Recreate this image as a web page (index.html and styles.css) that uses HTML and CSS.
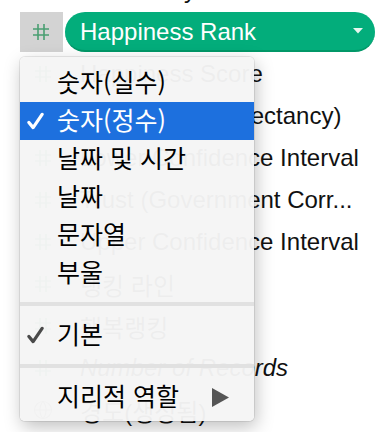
FILE: index.html
```html
<!DOCTYPE html>
<html lang="ko">
<head>
<meta charset="utf-8">
<link rel="stylesheet" href="styles.css">
</head>
<body>
<div class="list">
  <div class="row row-first">
    <svg class="ic" viewBox="0 0 18 18"><path d="M6 1v16M12 1v16M1 6h16M1 12h16" /></svg>
    <span class="name">Generosity</span>
  </div>
  <div class="row row-sel">
    <div class="sq"><svg class="ic" viewBox="0 0 18 18"><path d="M6 1v16M12 1v16M1 6h16M1 12h16" /></svg></div>
    <div class="pill">
      <span class="pill-text">Happiness Rank</span>
      <svg class="caret" viewBox="0 0 10 6"><polygon points="0,0 10,0 5,5.5" /></svg>
    </div>
  </div>
  <div class="row"><svg class="ic" viewBox="0 0 18 18"><path d="M6 1v16M12 1v16M1 6h16M1 12h16" /></svg><span class="name">Happiness Score</span></div>
  <div class="row"><svg class="ic" viewBox="0 0 18 18"><path d="M6 1v16M12 1v16M1 6h16M1 12h16" /></svg><span class="name">Health (Life Expectancy)</span></div>
  <div class="row"><svg class="ic" viewBox="0 0 18 18"><path d="M6 1v16M12 1v16M1 6h16M1 12h16" /></svg><span class="name">Lower Confidence Interval</span></div>
  <div class="row"><svg class="ic" viewBox="0 0 18 18"><path d="M6 1v16M12 1v16M1 6h16M1 12h16" /></svg><span class="name">Trust (Government Corr...</span></div>
  <div class="row"><svg class="ic" viewBox="0 0 18 18"><path d="M6 1v16M12 1v16M1 6h16M1 12h16" /></svg><span class="name">Upper Confidence Interval</span></div>
  <div class="row"><svg class="ic" viewBox="0 0 18 18"><path d="M6 1v16M12 1v16M1 6h16M1 12h16" /></svg><span class="name">랭킹 라인</span></div>
  <div class="row"><svg class="ic" viewBox="0 0 18 18"><path d="M6 1v16M12 1v16M1 6h16M1 12h16" /></svg><span class="name">행복랭킹</span></div>
  <div class="row"><svg class="ic" viewBox="0 0 18 18"><path d="M6 1v16M12 1v16M1 6h16M1 12h16" /></svg><span class="name italic">Number of Records</span></div>
  <div class="row"><svg class="ic globe" viewBox="0 0 20 20"><circle cx="10" cy="10" r="8.5" /><path d="M1.5 10h17M10 1.5c-4 4-4 13 0 17M10 1.5c4 4 4 13 0 17" /></svg><span class="name">경도(생성됨)</span></div>
</div>

<div class="menu">
  <div class="item"><span class="chk"></span><span class="label">숫자(실수)</span></div>
  <div class="item active"><span class="chk"><svg viewBox="0 0 18 18"><path d="M2 10.5 L6.5 16 L16 2" /></svg></span><span class="label">숫자(정수)</span></div>
  <div class="item"><span class="chk"></span><span class="label">날짜 및 시간</span></div>
  <div class="item"><span class="chk"></span><span class="label">날짜</span></div>
  <div class="item"><span class="chk"></span><span class="label">문자열</span></div>
  <div class="item"><span class="chk"></span><span class="label">부울</span></div>
  <div class="sep"></div>
  <div class="item"><span class="chk gray"><svg viewBox="0 0 18 18"><path d="M2 10.5 L6.5 16 L16 2" /></svg></span><span class="label">기본</span></div>
  <div class="sep"></div>
  <div class="item"><span class="chk"></span><span class="label">지리적 역할</span><svg class="sub" viewBox="0 0 17 19"><polygon points="0,0 17,9.5 0,19" /></svg></div>
</div>
</body>
</html>
```
FILE: styles.css
```css
html, body {
  margin: 0;
  padding: 0;
  background: #ffffff;
  overflow: hidden;
  width: 380px;
  height: 432px;
}
body {
  position: relative;
  font-family: "Liberation Sans", "Noto Sans CJK KR", sans-serif;
  color: #111;
}
.list {
  display: flex;
  flex-direction: column;
  margin-top: -31px;
}
.row {
  display: flex;
  align-items: center;
  height: 42px;
  padding-left: 34px;
  font-size: 24px;
  white-space: nowrap;
}
.ic {
  width: 18px;
  height: 18px;
  flex: none;
  margin-right: 28px;
  fill: none;
  stroke: #4a9f72;
  stroke-width: 1.6;
}
.globe {
  width: 20px;
  height: 20px;
  stroke: #888;
  stroke-width: 1.2;
  margin-left: -1px;
  margin-right: 27px;
}
.italic { font-style: italic; }
.row-sel {
  padding-left: 20px;
}
.sq {
  width: 43px;
  height: 40px;
  background: #d3d3d3;
  display: flex;
  align-items: center;
  justify-content: center;
  flex: none;
}
.sq .ic {
  margin: 0 2px 0 0;
}
.pill {
  margin-left: 2px;
  width: 310px;
  height: 40px;
  box-sizing: border-box;
  border-radius: 20px;
  background: #03ad7b;
  border-bottom: 2px solid #019868;
  display: flex;
  align-items: center;
  padding: 0 12px 0 15px;
  color: #fff;
}
.pill-text {
  flex: 1;
  font-size: 24px;
  margin-top: 1px;
}
.caret {
  width: 10px;
  height: 6px;
  fill: #e8f6ef;
}
.menu {
  position: absolute;
  left: 20px;
  top: 57px;
  width: 234px;
  box-sizing: border-box;
  padding: 7px 0 5px;
  background: rgba(245, 245, 245, 0.97);
  border-radius: 5px;
  box-shadow: 0 0 0 1px rgba(0,0,0,0.08), 2px 6px 18px rgba(0,0,0,0.25);
  font-family: "Noto Sans CJK KR", "Liberation Sans", sans-serif;
  font-size: 25px;
  font-weight: 400;
  color: #000;
}
.item {
  display: flex;
  align-items: center;
  height: 38px;
  line-height: 38px;
}
.item .label {
  margin-top: -5px;
}
.item.active {
  background: #1d70de;
  color: #fff;
}
.chk {
  width: 37px;
  flex: none;
  display: flex;
  align-items: center;
  padding-left: 7px;
  box-sizing: border-box;
}
.chk svg {
  width: 17px;
  height: 18px;
  fill: none;
  stroke: #fff;
  stroke-width: 3.4;
  stroke-linecap: round;
  stroke-linejoin: round;
}
.chk.gray svg {
  stroke: #4a4a4a;
}
.sep {
  height: 4px;
  background: #e1e1e1;
  margin: 10px 0;
}
.sub {
  width: 17px;
  height: 19px;
  fill: #555;
  margin-left: auto;
  margin-right: 25px;
}
```
